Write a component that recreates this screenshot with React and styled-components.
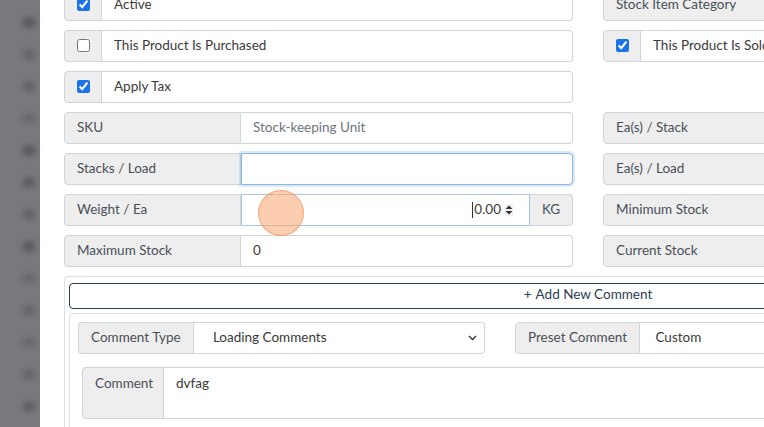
import React from "react";
import styled, { createGlobalStyle } from "styled-components";

const Global = createGlobalStyle`
  html, body { margin: 0; padding: 0; background: #fff; overflow: hidden; }
  body { font-family: Lato, "Open Sans", "Liberation Sans", sans-serif; color: #495057; }
  * { box-sizing: border-box; }
`;

const Page = styled.div`
  display: flex;
  width: 764px;
  height: 427px;
  overflow: hidden;
  position: relative;
`;

const Sidebar = styled.div`
  width: 40px;
  flex: none;
  background: #77797c;
  display: flex;
  flex-direction: column;
  align-items: flex-end;
  padding: 18px 5px 0 0;
  gap: 23px;
`;

const Blob = styled.div`
  width: 12px;
  height: 9px;
  border-radius: 4px;
  background: #4d4e51;
  filter: blur(3px);
  opacity: ${p => p.$o};
`;

const Main = styled.div`
  flex: 1;
  overflow: hidden;
  padding-left: 24px;
`;

const Inner = styled.div`
  margin-top: -11px;
  width: 1100px;
`;

const Grid = styled.div`
  display: grid;
  grid-template-columns: 509px 509px;
  column-gap: 30px;
  row-gap: 9px;
`;

const Group = styled.div`
  display: flex;
  height: ${p => p.$h || 32}px;
  font-size: 13.5px;
  line-height: 1;
`;

const Addon = styled.div`
  flex: none;
  width: ${p => p.$w}px;
  background: #eeeeee;
  border: 1px solid #ced4da;
  border-radius: ${p => (p.$last ? "0 4px 4px 0" : "4px 0 0 4px")};
  ${p => (p.$last ? "border-left: none;" : "")}
  display: flex;
  align-items: ${p => (p.$top ? "flex-start" : "center")};
  justify-content: ${p => (p.$center ? "center" : "flex-start")};
  padding: ${p => (p.$top ? "9px 12px 0" : "0 12px 1px")};
  color: #495057;
  white-space: nowrap;
`;

const Field = styled.div`
  flex: 1;
  min-width: 0;
  border: 1px solid ${p => (p.$focus ? "#86b7e8" : p.$soft ? "#a9c5e2" : "#ced4da")};
  border-left: ${p => (p.$focus || p.$soft ? "" : "none")};
  border-radius: ${p => (p.$mid ? "0" : "0 4px 4px 0")};
  box-shadow: ${p => (p.$focus ? "0 0 0 2px rgba(120,170,225,0.25)" : "none")};
  background: #fff;
  display: flex;
  align-items: ${p => (p.$top ? "flex-start" : "center")};
  justify-content: ${p => (p.$right ? "flex-end" : "flex-start")};
  padding: ${p => (p.$top ? "9px 12px 0" : p.$right ? "0 16px 1px 12px" : "0 12px 1px")};
  color: ${p => (p.$placeholder ? "#6c757d" : "#3a3a3a")};
  white-space: nowrap;
  overflow: hidden;
`;

const Check = styled.input.attrs({ type: "checkbox", readOnly: true })`
  width: 13px;
  height: 13px;
  margin: 0;
  accent-color: #1a73e8;
`;

const FullRow = styled.div`
  grid-column: 1 / -1;
`;

const Card = styled.div`
  border: 1px solid #dcdfe3;
  border-radius: 4px;
  padding: 6px 4px 0;
`;

const AddButton = styled.div`
  height: 26px;
  border: 1px solid #2c3e50;
  border-radius: 4px;
  display: flex;
  align-items: center;
  justify-content: center;
  color: #2c3e50;
  font-size: 13.5px;
  line-height: 1;
  padding-bottom: 3px;
  gap: 4px;
`;

const SubCard = styled.div`
  margin-top: 4px;
  border: 1px solid #dcdfe3;
  border-radius: 4px;
  padding: 8px 8px 20px;
`;

const SubRow = styled.div`
  display: flex;
  gap: 30px;
  margin-bottom: 13px;
`;

const Half = styled.div`
  width: ${p => p.$w}px;
  flex: none;
`;

const CommentWrap = styled.div`
  padding-left: 4px;
`;

const Chevron = styled.svg`
  margin-left: auto;
  margin-right: -5px;
`;

const Caret = styled.span`
  display: inline-block;
  width: 1px;
  height: 16px;
  background: #333;
  margin-right: 1px;
`;

const Spinner = styled.svg`
  margin-left: 4px;
  background: #f2f2f2;
`;

const Ripple = styled.div`
  position: absolute;
  left: 258px;
  top: 190px;
  width: 46px;
  height: 46px;
  border-radius: 50%;
  background: rgba(250, 165, 110, 0.55);
  border: 1.5px solid rgba(240, 140, 80, 0.6);
  pointer-events: none;
`;

function CheckRow({ label, checked }) {
  return (
    <Group>
      <Addon $w={38} $center>
        <Check checked={checked} />
      </Addon>
      <Field>{label}</Field>
    </Group>
  );
}

function LabelRow({ label, value, placeholder, focus }) {
  return (
    <Group>
      <Addon $w={177}>{label}</Addon>
      <Field $focus={focus} $placeholder={!!placeholder}>
        {placeholder || value}
      </Field>
    </Group>
  );
}

const blobs = [0.9, 0.55, 0.6, 0.45, 0.9, 0.75, 0.6, 0.85, 0.45, 0.5, 0.45, 0.5, 0.7];

export default function App() {
  return (
    <>
      <Global />
      <Page>
        <Sidebar>
          {blobs.map((o, i) => (
            <Blob key={i} $o={o} />
          ))}
        </Sidebar>
        <Main>
          <Inner>
            <Grid>
              <CheckRow label="Active" checked />
              <LabelRow label="Stock Item Category" value="" />
              <CheckRow label="This Product Is Purchased" checked={false} />
              <CheckRow label="This Product Is Sold" checked />
              <CheckRow label="Apply Tax" checked />
              <div />
              <LabelRow label="SKU" placeholder="Stock-keeping Unit" />
              <LabelRow label="Ea(s) / Stack" value="" />
              <LabelRow label="Stacks / Load" value="" focus />
              <LabelRow label="Ea(s) / Load" value="" />
              <Group>
                <Addon $w={177}>Weight / Ea</Addon>
                <Field $soft $mid $right>
                  <Caret />
                  0.00
                  <Spinner width="8" height="12" viewBox="0 0 8 12">
                    <path d="M0.5 5 L4 1.5 L7.5 5 Z M0.5 7 L4 10.5 L7.5 7 Z" fill="#333" />
                  </Spinner>
                </Field>
                <Addon $w={43} $last $center>KG</Addon>
              </Group>
              <LabelRow label="Minimum Stock" value="" />
              <LabelRow label="Maximum Stock" value="0" />
              <LabelRow label="Current Stock" value="" />
              <FullRow>
                <Card>
                  <AddButton>
                    <span>+</span>
                    <span>Add New Comment</span>
                  </AddButton>
                  <SubCard>
                    <SubRow>
                      <Half $w={407}>
                        <Group>
                          <Addon $w={116}>Comment Type</Addon>
                          <Field>
                            &nbsp;&nbsp;Loading Comments
                            <Chevron width="9" height="6" viewBox="0 0 9 6">
                              <path d="M1 1 L4.5 4.5 L8 1" fill="none" stroke="#333" strokeWidth="1.4" />
                            </Chevron>
                          </Field>
                        </Group>
                      </Half>
                      <Half $w={520}>
                        <Group>
                          <Addon $w={125}>Preset Comment</Addon>
                          <Field>&nbsp;Custom</Field>
                        </Group>
                      </Half>
                    </SubRow>
                    <CommentWrap>
                      <Group $h={52}>
                        <Addon $w={82} $top>Comment</Addon>
                        <Field $top>dvfag</Field>
                      </Group>
                    </CommentWrap>
                  </SubCard>
                </Card>
              </FullRow>
            </Grid>
          </Inner>
        </Main>
        <Ripple />
      </Page>
    </>
  );
}
